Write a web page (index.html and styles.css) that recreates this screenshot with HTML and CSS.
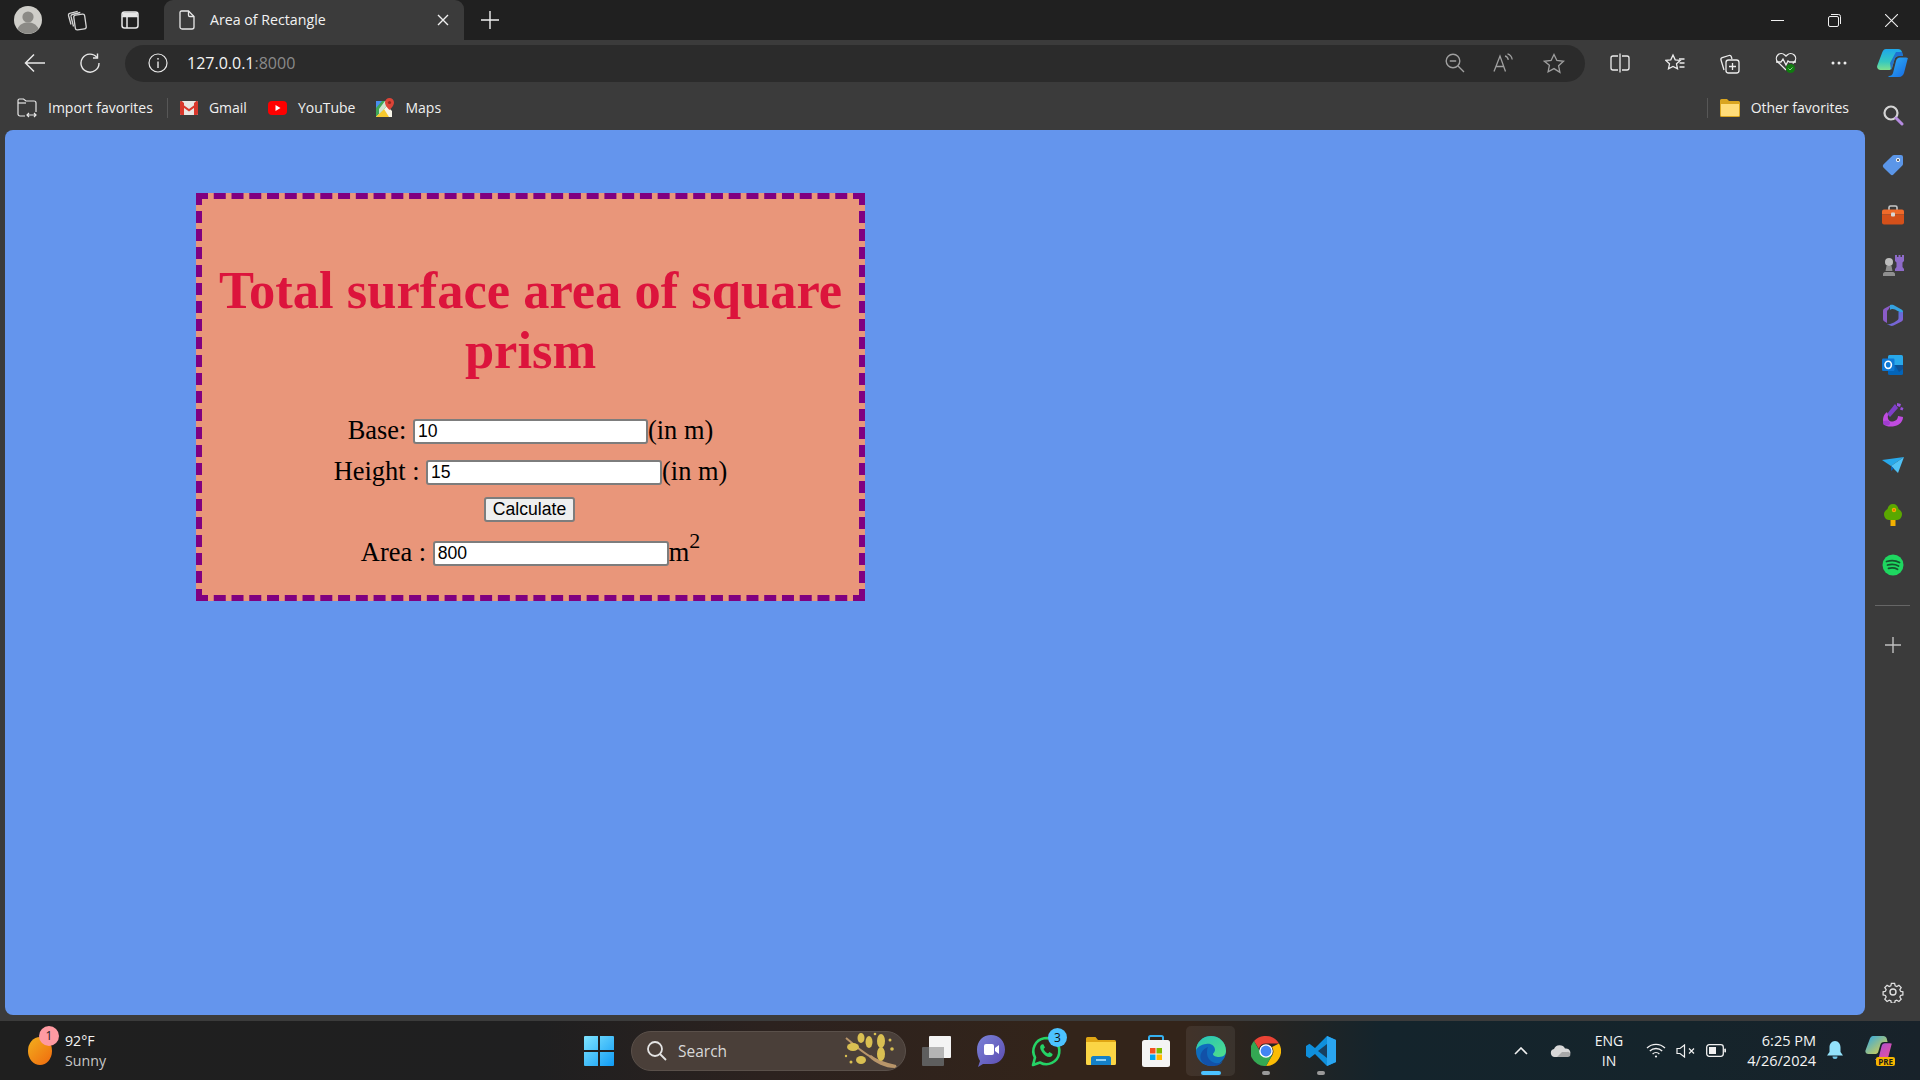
FILE: index.html
```html
<!DOCTYPE html>
<html>
<head>
  <meta charset="utf-8">
  <title>Area of Rectangle</title>
  <link rel="stylesheet" href="styles.css">
</head>
<body>
  <div id="app">

    <!-- tab strip -->
    <div class="tabstrip">
      <svg class="avatar" width="28" height="28" viewBox="0 0 28 28"><circle cx="14" cy="14" r="14" fill="#cfcec9"/><circle cx="14" cy="11" r="5.6" fill="#8b8a86"/><path d="M3.5 23c2-5 6-6.5 10.500-6.500s8.500 1.500 10.500 6.500a14 14 0 0 1-21 0z" fill="#8b8a86"/></svg>
      <svg class="collections-ico" width="22" height="24" viewBox="0 0 22 24" fill="none" stroke="#d6d6d6" stroke-width="1.300"><path d="M5 16.500 2.500 7.500c-.3-1 .3-1.800 1.200-2.100l8-2"/><path d="M7.500 18.500 5 8.500c-.2-1 .4-1.800 1.300-2l8-2"/><rect x="8.500" y="6.500" width="11" height="15" rx="2" transform="rotate(-8 14 14)"/></svg>
      <svg class="vtabs-ico" width="18" height="18" viewBox="0 0 18 18" fill="none" stroke="#e6e6e6" stroke-width="1.500"><rect x="1" y="1" width="16" height="16" rx="2.500"/><path d="M1 5.500h16M6 5.500V17"/><path d="M1.500 1.500h15v4h-15z" fill="#e6e6e6" stroke="none"/></svg>
      <div class="tab">
        <svg width="16" height="20" viewBox="0 0 16 20" fill="none" stroke="#e8e8e8" stroke-width="1.300"><path d="M2.500 1h7L15 6.500V17a2 2 0 0 1-2 2H3a2 2 0 0 1-2-2V2.500A1.500 1.500 0 0 1 2.500 1z"/><path d="M9.500 1v4.200a1.300 1.300 0 0 0 1.300 1.300H15"/></svg>
        <span class="tab-title">Area of Rectangle</span>
        <svg class="tab-close" width="12" height="12" viewBox="0 0 12 12" stroke="#f0f0f0" stroke-width="1.400"><path d="M1 1l10 10M11 1 1 11"/></svg>
      </div>
      <svg class="new-tab" width="18" height="18" viewBox="0 0 18 18" stroke="#f0f0f0" stroke-width="1.400"><path d="M9 0v18M0 9h18"/></svg>
      <div class="window-controls">
        <svg width="13" height="13" viewBox="0 0 13 13" stroke="#f0f0f0" stroke-width="1"><path d="M0 6.500h13"/></svg>
        <svg width="13" height="13" viewBox="0 0 13 13" fill="none" stroke="#f0f0f0" stroke-width="1"><rect x=".5" y="2.500" width="10" height="10" rx="1.500"/><path d="M3 .5h7.500a2 2 0 0 1 2 2V10"/></svg>
        <svg width="13" height="13" viewBox="0 0 13 13" stroke="#f0f0f0" stroke-width="1.100"><path d="M0 0l13 13M13 0 0 13"/></svg>
      </div>
    </div>

    <!-- toolbar -->
    <div class="toolbar">
      <svg class="back" width="22" height="20" viewBox="0 0 22 20" fill="none" stroke="#e8e8e8" stroke-width="1.500"><path d="M21 10H2M10 1.500 1.500 10l8.500 8.500"/></svg>
      <svg class="reload" width="20" height="20" viewBox="0 0 20 20" fill="none" stroke="#e8e8e8" stroke-width="1.400"><path d="M17 4.500A9 9 0 1 0 19 10"/><path d="M17.500 .5v4.500H13"/></svg>
      <div class="omnibox">
        <svg width="20" height="20" viewBox="0 0 20 20" fill="none" stroke="#e8e8e8" stroke-width="1.200"><circle cx="10" cy="10" r="9"/><path d="M10 8.500V15" stroke-width="1.400"/><circle cx="10" cy="5.800" r=".9" fill="#e8e8e8" stroke="none"/></svg>
        <span class="url">127.0.0.1<span class="port">:8000</span></span>
        <div class="omni-right">
          <svg width="20" height="20" viewBox="0 0 20 20" fill="none" stroke="#a0a0a0" stroke-width="1.400"><circle cx="8" cy="8" r="6.800"/><path d="M4.800 8h6.400M13 13l6 6"/></svg>
          <svg width="22" height="20" viewBox="0 0 22 20" fill="none" stroke="#a0a0a0" stroke-width="1.300"><path d="M1 18.500 7 3l5.500 15.500M3 13.500h8"/><path d="M12 3c2 .5 3 2 3.300 3.800M14.500 .8c2.800.8 4.300 3 4.700 5.700"/></svg>
          <svg width="22" height="21" viewBox="0 0 22 21" fill="none" stroke="#a0a0a0" stroke-width="1.300"><path d="m11 1.500 2.900 6 6.600.8-4.900 4.500 1.300 6.500L11 15.600l-5.900 3.200 1.300-6.500L1.500 8.300l6.600-.8z"/></svg>
        </div>
      </div>
      <div class="tool-icons">
        <svg width="20" height="20" viewBox="0 0 20 20" fill="none" stroke="#ececec" stroke-width="1.300"><path d="M8 3H3a2 2 0 0 0-2 2v10a2 2 0 0 0 2 2h5M12 3h5a2 2 0 0 1 2 2v10a2 2 0 0 1-2 2h-5M10 .5v19"/></svg>
        <svg width="20" height="20" viewBox="0 0 20 20" fill="none" stroke="#ececec" stroke-width="1.300"><path d="m8 2 2.200 4.800 5 .6-3.700 3.400 1 5L8 13.400 3.500 15.800l1-5L.8 7.400l5-.6z"/><path d="M14 6h5.500M14.500 10h5M14.500 14h5"/></svg>
        <svg width="21" height="21" viewBox="0 0 21 21" fill="none" stroke="#ececec" stroke-width="1.300"><rect x="7" y="7" width="13" height="13" rx="2.500"/><path d="M13.500 10v7M10 13.500h7"/><path d="M5 17 2 7c-.3-1 .2-2 1.200-2.300L10 2.500c1-.3 2 .2 2.300 1.200L13 6"/></svg>
        <svg width="22" height="22" viewBox="0 0 22 22" fill="none" stroke="#ececec" stroke-width="1.300"><path d="M11 18 2.800 10a5 5 0 0 1 0-7 5 5 0 0 1 7 0L11 4.200 12.200 3a5 5 0 0 1 7 0 5 5 0 0 1 0 7l-1.500 1.500"/><path d="M1 10h5l2-3 3 6 2-4 1.500 1H21"/><circle cx="15.500" cy="16.500" r="4.500" fill="#107c10" stroke="none"/><path d="m13.500 16.500 1.500 1.500 2.500-2.500" stroke="#9ad29a" stroke-width=".9"/></svg>
        <svg width="16" height="4" viewBox="0 0 16 4" fill="#ececec"><circle cx="2" cy="2" r="1.500"/><circle cx="8" cy="2" r="1.500"/><circle cx="14" cy="2" r="1.500"/></svg>
      </div>
      <svg class="copilot" width="32" height="28" viewBox="0 0 32 28">
        <defs>
          <linearGradient id="cpA" x1="0" y1="0" x2="0" y2="1"><stop offset="0" stop-color="#1ea7ec"/><stop offset=".6" stop-color="#35c8c0"/><stop offset="1" stop-color="#7ee08e"/></linearGradient>
          <linearGradient id="cpB" x1="0" y1="0" x2="1" y2="1"><stop offset="0" stop-color="#30b4f4"/><stop offset="1" stop-color="#1668e3"/></linearGradient>
        </defs>
        <path d="M9 0h12c2 0 3.500 1 4 3l1 4H22c-2.500 0-4 1.500-4.500 3.500L15 19c-.5 1.500-2 2-3.500 2H3.500C1 21-.5 19 .3 16.500L5 4C6 1.500 7 0 9 0z" fill="url(#cpA)"/>
        <path d="M31 8.500 27 24c-.6 2-2.500 4-5 4H12c-1 0-1-1 0-1 2 0 3.500-1 4-3l3-12c.5-2 2-3.500 4-3.500h6c1.500 0 2.500 1 2 2.500z" fill="url(#cpB)"/>
        <path d="M25 3l1 4h-4c-2.500 0-4 1.500-4.500 3.500L15 19c-.5 1.500-1 2-1 2l-1-7 6-11z" fill="#1b5fd0" opacity=".8"/>
      </svg>
    </div>

    <div class="browser-body">
      <div class="content-col">
        <!-- favorites bar -->
        <div class="favbar">
          <div class="fav fav-import">
            <svg width="20" height="20" viewBox="0 0 20 20" fill="none" stroke="#e8e8e8" stroke-width="1.200"><path d="M8 18H3a2 2 0 0 1-2-2V2.500A1.500 1.500 0 0 1 2.500 1h4L9 3h8a2 2 0 0 1 2 2v9"/><path d="M1 5h8"/><path d="M10 17h9M12 15l-2 2 2 2M17 15l2 2-2 2"/></svg>
            <span>Import favorites</span>
          </div>
          <div class="fav-sep"></div>
          <div class="fav">
            <svg width="18" height="14" viewBox="0 0 18 14"><rect width="18" height="14" rx="1.500" fill="#e9e6e3"/><path d="M0 1.500 9 8l9-6.500V4L9 10.500 0 4z" fill="#d9372c"/><path d="M0 1.500c0-1 1-1.800 2-1.300L4 2v12H1.500A1.500 1.500 0 0 1 0 12.500zM18 1.500c0-1-1-1.800-2-1.300L14 2v12h2.500a1.500 1.500 0 0 0 1.500-1.500z" fill="#d9372c"/></svg>
            <span>Gmail</span>
          </div>
          <div class="fav">
            <svg width="19" height="14" viewBox="0 0 19 14"><rect width="19" height="14" rx="4" fill="#f00"/><path d="m7.500 4 5 3-5 3z" fill="#fff"/></svg>
            <span>YouTube</span>
          </div>
          <div class="fav">
            <svg width="18" height="19" viewBox="0 0 18 19"><path d="M0 3h11v16H0z" fill="#3fa757"/><path d="M0 19 11 8l5 5v6z" fill="#f7f4e8"/><path d="M0 19 8 11l5 8z" fill="#f7c92e"/><path d="M0 3h6L0 10z" fill="#4a8ef0"/><path d="M3 11 9 3h2v5l-8 8z" fill="#cfe3cf"/><path d="M13.500 0A4.500 4.500 0 0 0 9 4.500C9 8 13.500 12 13.500 12S18 8 18 4.500A4.500 4.500 0 0 0 13.500 0z" fill="#dc4437"/><circle cx="13.500" cy="4.500" r="1.600" fill="#8e2a22"/></svg>
            <span>Maps</span>
          </div>
          <div class="fav-spacer"></div>
          <div class="fav-sep"></div>
          <div class="fav other-fav">
            <svg width="20" height="18" viewBox="0 0 20 18"><path d="M1.500 0h5.500l2 2h9.500A1.500 1.500 0 0 1 20 3.500v13a1.500 1.500 0 0 1-1.500 1.500h-17A1.500 1.500 0 0 1 0 16.500v-15A1.500 1.500 0 0 1 1.500 0z" fill="#d9a520"/><path d="M1 5h18v11.500a.5.500 0 0 1-.5.500h-17a.5.500 0 0 1-.5-.5z" fill="#ffdd7a"/></svg>
            <span>Other favorites</span>
          </div>
        </div>

        <!-- the page itself -->
        <div class="viewport">
          <div class="box">
            <h1>Total surface area of square prism</h1>
            <div class="row">Base: <input type="text" class="in-base" value="10">(in m)</div>
            <div class="row">Height : <input type="text" class="in-height" value="15">(in m)</div>
            <div class="row row-btn"><button type="button">Calculate</button></div>
            <div class="row row-area">Area : <input type="text" class="in-area" value="800">m<sup>2</sup></div>
          </div>
        </div>
      </div>

      <!-- edge sidebar -->
      <div class="sidebar">
        <div class="side-item"><svg width="22" height="22" viewBox="0 0 22 22" fill="none"><circle cx="9" cy="9" r="6.500" stroke="#d4d4d4" stroke-width="2.200"/><path d="m14 14 6 6" stroke="#b58be0" stroke-width="3" stroke-linecap="round"/></svg></div>
        <div class="side-item"><svg width="22" height="22" viewBox="0 0 22 22"><path d="M12 1h7a2 2 0 0 1 2 2v7a2 2 0 0 1-.6 1.400l-9 9.200a2 2 0 0 1-2.800 0l-7.200-7.200a2 2 0 0 1 0-2.800l9.200-9A2 2 0 0 1 12 1z" fill="#5b96e8"/><circle cx="16" cy="6" r="2" fill="#fff"/><circle cx="16" cy="6" r="1" fill="#333"/></svg></div>
        <div class="side-item"><svg width="22" height="20" viewBox="0 0 22 20"><path d="M7 5V2.500A1.500 1.500 0 0 1 8.500 1h5A1.500 1.500 0 0 1 15 2.500V5" fill="none" stroke="#c8c8c8" stroke-width="1.600"/><path d="M2 4.500h18A2 2 0 0 1 22 6.500v3H0v-3a2 2 0 0 1 2-2z" fill="#f06a2a"/><path d="M0 9.500h22v8a2 2 0 0 1-2 2H2a2 2 0 0 1-2-2z" fill="#d4501a"/><rect x="9" y="7.500" width="4" height="4" rx="1" fill="#d8d8d8"/></svg></div>
        <div class="side-item"><svg width="22" height="22" viewBox="0 0 22 22"><path d="M13 1h2v2h1.500V1h2v2H20V1h2v6l-1.500 1.500V13l1.500 2v2h-9v-2l1.500-2V8.500L13 7z" fill="#8e6bc9"/><circle cx="7" cy="8" r="4" fill="#bdbdbd"/><path d="M4.500 12h5l1 5h-7zM1 22v-2c0-1 1-2 2-2h8c1 0 2 1 2 2v2z" fill="#8f8f8f"/></svg></div>
        <div class="side-item"><svg width="22" height="22" viewBox="0 0 22 22"><defs><linearGradient id="m365" x1="0" y1="0" x2="1" y2="1"><stop offset="0" stop-color="#2f7fe0"/><stop offset="1" stop-color="#9b59d0"/></linearGradient></defs><path d="M9 1 2.500 4.500C1.500 5 1 6 1 7v8c0 1 .5 2 1.500 2.500L5 19V8c0-1 .5-2 1.500-2.500z" fill="#8a5cc8"/><path d="M8 1c1-.5 2.500-.5 3.500 0l8 4.500c1 .5 1.500 1.500 1.500 2.500v2l-8-4.500c-2-1-4-.5-5 .5z" fill="#35a2e0"/><path d="M21 8v7c0 1-.5 2-1.500 2.500l-8 4c-1 .5-2.500.5-3.500 0L5 20c3 .5 5-.5 7-1.500l3-2c1-.5 1.500-1.500 1.500-2.500V8z" fill="url(#m365)"/></svg></div>
        <div class="side-item"><svg width="21" height="20" viewBox="0 0 21 20"><rect x="6" y="0" width="15" height="19" rx="1.500" fill="#28a8ea"/><path d="M6 10h15v8.500a1.500 1.500 0 0 1-1.500 1.500h-12A1.500 1.500 0 0 1 6 18.500z" fill="#0364b8"/><path d="M13 10h8v4l-4 3z" fill="#14447d" opacity=".6"/><rect x="0" y="3.500" width="12.500" height="12.500" rx="1.200" fill="#0f78d4"/><ellipse cx="6.200" cy="9.800" rx="3.200" ry="3.600" fill="none" stroke="#fff" stroke-width="1.600"/></svg></div>
        <div class="side-item"><svg width="22" height="24" viewBox="0 0 22 24"><path d="M13 1 5 11l3 3 8-9z" fill="#7e3fc8"/><path d="M15 0l4 1-1 3-3-1zM19 4l2.500 1-1 2.500-2.500-1z" fill="#9b51dd"/><path d="M5 9C1 12 0 17 2 21c2 3 7 3 11 2 5-1 8-5 8-9l-5-1c0 3-2 5-5 5.500S5 17 6 12z" fill="#c04be0"/><ellipse cx="4.500" cy="20" rx="3.500" ry="2.500" fill="#a03cd0"/></svg></div>
        <div class="side-item"><svg width="22" height="16" viewBox="0 0 22 16"><path d="M0 3 22 0 9 9z" fill="#28a8ea"/><path d="M22 0 9 9l7 7z" fill="#50c1f5"/><path d="M9 9v5l3-2.500z" fill="#0b5fb0"/></svg></div>
        <div class="side-item"><svg width="18" height="22" viewBox="0 0 18 22"><rect x="6.500" y="14" width="5" height="8" fill="#f3b000"/><path d="M9 0c3 0 5 2 5.500 5 2 1 3.500 3 3.500 5 0 3-2 6-5 6H5c-3 0-5-3-5-6 0-2 1.500-4 3.500-5C4 2 6 0 9 0z" fill="#5aa800"/><circle cx="10" cy="6" r="2.200" fill="#f3b000"/><circle cx="10" cy="6" r="1" fill="#e26a00"/></svg></div>
        <div class="side-item"><svg width="22" height="22" viewBox="0 0 22 22" fill="none"><circle cx="11" cy="11" r="10.500" fill="#1ed760"/><path d="M4.500 7.500c4.500-1.300 9.500-1 13 1M5.500 11c4-1 8-.7 11 1M6.500 14.300c3.200-.8 6.500-.5 9 .9" stroke="#14532d" stroke-width="1.800" stroke-linecap="round"/></svg></div>
        <div class="side-sep"></div>
        <svg class="side-plus" width="16" height="16" viewBox="0 0 16 16" stroke="#c0c0c0" stroke-width="1.400"><path d="M8 0v16M0 8h16"/></svg>
        <svg class="side-gear" width="22" height="22" viewBox="0 0 22 22" fill="none" stroke="#e0e0e0" stroke-width="1.400"><circle cx="11" cy="11" r="3"/><path d="M9.200 1.500h3.600l.6 2.700 1.800.8 2.400-1.500 2.500 2.500-1.500 2.400.8 1.800 2.600.6v3.400l-2.600.6-.8 1.800 1.500 2.400-2.500 2.500-2.400-1.500-1.800.8-.6 2.600H9.200l-.6-2.600-1.800-.8-2.400 1.500-2.500-2.500 1.500-2.400-.8-1.800-2.600-.6v-3.400l2.600-.6.8-1.800-1.500-2.400 2.500-2.500 2.400 1.500 1.800-.8z" transform="translate(1.100 1.100) scale(.9)"/></svg>
      </div>
    </div>

    <!-- windows taskbar -->
    <div class="taskbar">
      <div class="weather">
        <div class="weather-ico"><span class="weather-badge">1</span></div>
        <div class="weather-text"><div>92°F</div><div class="sunny">Sunny</div></div>
      </div>

      <div class="tb-center">
        <svg class="winlogo" width="30" height="30" viewBox="0 0 30 30"><defs><linearGradient id="wl" x1="0" y1="0" x2="1" y2="1"><stop offset="0" stop-color="#7fe4ff"/><stop offset="1" stop-color="#0f9bf5"/></linearGradient></defs><path d="M1 0h13v14H0V1a1 1 0 0 1 1-1zM16 0h13a1 1 0 0 1 1 1v13H16zM0 16h14v14H1a1 1 0 0 1-1-1zM16 16h14v13a1 1 0 0 1-1 1H16z" fill="url(#wl)"/></svg>
        <div class="searchbox">
          <svg width="21" height="21" viewBox="0 0 21 21" fill="none" stroke="#e4e4e4" stroke-width="1.800"><circle cx="9" cy="9" r="7"/><path d="m14 14 6 6"/></svg>
          <span>Search</span>
          <svg class="search-art" width="56" height="38" viewBox="0 0 56 38"><path d="M3 6c10 8 22 22 50 28" fill="none" stroke="#b9966a" stroke-width="2"/><path d="M28 23c6 5 14 10 26 11l-2 2c-10 0-20-5-26-11z" fill="#b9966a"/><g fill="#d9bf52"><ellipse cx="10" cy="15" rx="6" ry="4"/><ellipse cx="18" cy="6" rx="3.500" ry="5"/><ellipse cx="26" cy="10" rx="3.500" ry="6"/><ellipse cx="38" cy="9" rx="4" ry="7"/><ellipse cx="38" cy="22" rx="4" ry="7"/><ellipse cx="18" cy="28" rx="5" ry="4"/><circle cx="47" cy="8" r="1.500"/><circle cx="49" cy="17" r="1.800"/><circle cx="8" cy="30" r="1.500"/><circle cx="3" cy="24" r="1.200"/><circle cx="32" cy="2" r="1.300"/></g></svg>
        </div>
        <div class="tb-apps">
          <div class="tb-app">
            <svg width="30" height="30" viewBox="0 0 30 30"><rect x="1" y="11" width="22" height="19" rx="1" fill="#5e5e5e"/><rect x="8" y="0" width="22" height="22" rx="1" fill="#f4f4f4"/><rect x="8" y="11" width="15" height="11" fill="#b5b5b5"/></svg>
          </div>
          <div class="tb-app">
            <svg width="28" height="32" viewBox="0 0 28 32"><defs><linearGradient id="mt" x1="0" y1="0" x2="1" y2="1"><stop offset="0" stop-color="#7b83d8"/><stop offset="1" stop-color="#5b4bb0"/></linearGradient></defs><path d="M14 0c8 0 14 6 14 14.500S22 29 14 29H6l-5 3 2-6C1 23 0 19 0 14.500 0 6 6 0 14 0z" fill="url(#mt)"/><rect x="7" y="9" width="10" height="11" rx="2" fill="#fff"/><path d="m18 13 4-3v9l-4-3z" fill="#fff"/></svg>
          </div>
          <div class="tb-app">
            <svg class="wa" width="32" height="34" viewBox="0 0 32 34" fill="none"><path d="M3 31l2-7.500A13 13 0 1 1 10 28.500z" stroke="#25d366" stroke-width="2.600" stroke-linejoin="round"/><path d="M11 11c-1.500 1.500-1 4 1 7s5 5 7.500 5c2 0 3.500-2 3-3l-3-2-1.500 1.500c-2-.8-3.500-2.500-4.500-4.500l1.500-1.500-1.500-3c-1-.5-1.800 0-2.500.5z" fill="#25d366"/></svg>
            <span class="app-badge">3</span>
          </div>
          <div class="tb-app">
            <svg width="30" height="28" viewBox="0 0 30 28"><path d="M1.500 0h8L12 3h16.500A1.500 1.500 0 0 1 30 4.500V10H0V1.500A1.500 1.500 0 0 1 1.500 0z" fill="#e0a614"/><path d="M0 5h30v21.500a1.500 1.500 0 0 1-1.500 1.500h-27A1.500 1.500 0 0 1 0 26.500z" fill="#fbd545"/><path d="M5 28v-7c0-1 1-2 2-2h16c1 0 2 1 2 2v7z" fill="#1480c8"/><path d="M10 23h10" stroke="#8fd0f5" stroke-width="2"/></svg>
          </div>
          <div class="tb-app">
            <svg width="28" height="32" viewBox="0 0 28 32"><path d="M7 6V2.500A1.500 1.500 0 0 1 8.500 1h11A1.500 1.500 0 0 1 21 2.500V6" fill="none" stroke="#35b0ef" stroke-width="2"/><rect y="5" width="28" height="27" rx="2.500" fill="#f4f4f4"/><rect x="8" y="13" width="5.500" height="5.500" fill="#f25022"/><rect x="14.500" y="13" width="5.500" height="5.500" fill="#7fba00"/><rect x="8" y="19.500" width="5.500" height="5.500" fill="#00a4ef"/><rect x="14.500" y="19.500" width="5.500" height="5.500" fill="#ffb900"/></svg>
          </div>
          <div class="tb-app tb-app-active">
            <svg width="30" height="30" viewBox="0 0 30 30"><defs><linearGradient id="eg" x1="0" y1="0" x2="1" y2="1"><stop offset="0" stop-color="#27c3b8"/><stop offset="1" stop-color="#50e08a"/></linearGradient></defs><circle cx="15" cy="15" r="15" fill="#0f6cbd"/><path d="M0 15C0 6 7 0 15 0s15 6 15 15c0 3-2 6-7 6-3 0-6-1-6-3 0-1 2-2 2-4 0-4-4-7-9-6-5 .5-9 3-10 7z" fill="url(#eg)"/><path d="M11 17c0 6 5 11 12 10 2-.3 3-1 4-2-3 5-8 5-12 5-4 0-8-2-10-6C3 19 6 13 12 11c-1 2-1 4-1 6z" fill="#1251a8"/></svg>
            <span class="run-dot run-dot-active"></span>
          </div>
          <div class="tb-app">
            <svg width="30" height="30" viewBox="0 0 30 30"><path d="M15 0a15 15 0 0 1 13 7.500H15a7.500 7.500 0 0 0-7.200 5.300L3 5a15 15 0 0 1 12-5z" fill="#ea4335"/><path d="M28 7.500A15 15 0 0 1 15 30l6.500-11.300A7.500 7.500 0 0 0 21 11z" fill="#fbbc05"/><path d="M15 30A15 15 0 0 1 3 5l6.500 11.300A7.500 7.500 0 0 0 21.500 18.700z" fill="#34a853"/><circle cx="15" cy="15" r="6.800" fill="#fff"/><circle cx="15" cy="15" r="5.400" fill="#4285f4"/></svg>
            <span class="run-dot"></span>
          </div>
          <div class="tb-app">
            <svg width="30" height="30" viewBox="0 0 30 30"><path d="M21 0 30 4v22l-9 4-12-12-5.500 4.200L0 20V10l3.500-2.200L9 12z" fill="#0f8fdc"/><path d="M21 8v14l-9-7z" fill="#173f5f"/><path d="M21 0 30 4v22l-9 4z" fill="#2aa5f0"/></svg>
            <span class="run-dot"></span>
          </div>
        </div>
      </div>

      <div class="tray">
        <svg width="14" height="8" viewBox="0 0 14 8" fill="none" stroke="#f0f0f0" stroke-width="1.600"><path d="m1 7 6-6 6 6"/></svg>
        <svg class="tray-cloud" width="21" height="12" viewBox="0 0 21 12"><path d="M5 12a4 4 0 0 1-1-7.900A6 6 0 0 1 15 3.500 4.300 4.300 0 0 1 17 12z" fill="#d8d8d8"/><path d="M7 12l5-5 5 0a2.500 2.500 0 0 1 1.500 4.800l-1.500.2z" fill="#a8a8a8"/></svg>
        <div class="tray-lang"><div>ENG</div><div>IN</div></div>
        <svg class="tray-wifi" width="20" height="15" viewBox="0 0 20 15" fill="none" stroke="#f0f0f0" stroke-width="1.300"><path d="M1 5a13 13 0 0 1 18 0M3.800 8a9 9 0 0 1 12.400 0M6.600 11a5 5 0 0 1 6.800 0"/><circle cx="10" cy="13.500" r="1.100" fill="#f0f0f0" stroke="none"/></svg>
        <svg class="tray-vol" width="20" height="14" viewBox="0 0 20 14" fill="none" stroke="#f0f0f0" stroke-width="1.200"><path d="M1 4.500h3L8.500 1v12L4 9.500H1z"/><path d="m13 4.500 5 5M18 4.500l-5 5"/></svg>
        <svg class="tray-batt" width="20" height="13" viewBox="0 0 20 13"><rect x=".7" y=".7" width="16.600" height="11.600" rx="2.500" fill="none" stroke="#f0f0f0" stroke-width="1.300"/><rect x="3" y="3" width="7" height="7" fill="#f0f0f0"/><rect x="18.300" y="4.500" width="1.700" height="4" rx=".8" fill="#f0f0f0"/></svg>
        <div class="tray-clock"><div>6:25 PM</div><div>4/26/2024</div></div>
        <svg class="tray-bell" width="16" height="19" viewBox="0 0 16 19"><path d="M8 0c3.500 0 5.500 3 5.500 6.500V11l2.500 3.500H0L2.500 11V6.500C2.500 3 4.500 0 8 0z" fill="#93e2fb"/><path d="M5.500 15.500h5a2.500 2.500 0 0 1-5 0z" fill="#6fc4e6"/></svg>
        <div class="tray-copilot">
          <svg width="28" height="24" viewBox="0 0 32 28"><defs><linearGradient id="cpC" x1="0" y1="0" x2="1" y2="1"><stop offset="0" stop-color="#2ba7e8"/><stop offset="1" stop-color="#f0d33a"/></linearGradient><linearGradient id="cpD" x1="0" y1="0" x2="1" y2="1"><stop offset="0" stop-color="#a24fd6"/><stop offset="1" stop-color="#f0509a"/></linearGradient></defs><path d="M9 0h12c2 0 3.500 1 4 3l1 4H22c-2.500 0-4 1.500-4.500 3.500L15 19c-.5 1.500-2 2-3.500 2H3.500C1 21-.5 19 .3 16.500L5 4C6 1.500 7 0 9 0z" fill="url(#cpC)"/><path d="M31 8.500 27 24c-.6 2-2.500 4-5 4H12c-1 0-1-1 0-1 2 0 3.500-1 4-3l3-12c.5-2 2-3.500 4-3.500h6c1.500 0 2.500 1 2 2.500z" fill="url(#cpD)"/></svg>
          <span class="pre-tag">PRE</span>
        </div>
      </div>
    </div>
  </div>
</body>
</html>
```

FILE: styles.css
```css
*, *:before, *:after { box-sizing: border-box; }
html, body { height: 100%; }
body { margin: 0; padding: 0; font-family: "Open Sans", "Noto Sans", sans-serif; background-color: #3b3b3b; overflow: hidden; }
svg { display: block; flex-shrink: 0; }
#app { display: flex; flex-direction: column; height: 100%; }

/* tab strip */
.tabstrip { height: 40px; background-color: #202020; display: flex; align-items: center; padding-left: 14px; }
.collections-ico { margin-left: 24px; }
.vtabs-ico { margin-left: 33px; }
.tab {
  align-self: stretch;
  width: 300px;
  margin-left: 25px;
  background-color: #3b3b3b;
  border-radius: 9px 9px 0 0;
  display: flex;
  align-items: center;
  padding-left: 15px;
  color: #f2f2f2;
  font-size: 14.2px;
}
.tab-title { margin: 0 0 2px 15px; flex: 1; }
.tab-close { margin-right: 15px; }
.new-tab { margin-left: 17px; }
.window-controls { margin-left: auto; display: flex; align-items: center; gap: 44px; padding-right: 22px; }

/* toolbar */
.toolbar { height: 48px; background-color: #3b3b3b; display: flex; align-items: center; padding: 0 10px 2px 24px; }
.reload { margin-left: 34px; }
.omnibox {
  flex: none;
  width: 1460px;
  height: 37px;
  margin-left: 25px;
  background-color: #2b2b2b;
  border-radius: 19px;
  display: flex;
  align-items: center;
  padding: 0 20px 0 23px;
}
.url { margin-left: 19px; color: #f4f4f4; font-size: 16px; }
.port { color: #8a8a8a; }
.omni-right { margin-left: auto; display: flex; align-items: center; gap: 28px; }
.tool-icons { margin-left: 25px; display: flex; align-items: center; gap: 34.5px; }
.copilot { margin-left: 30px; }

/* main area */
.browser-body { flex: 1; display: flex; min-height: 0; }
.content-col { flex: 1; display: flex; flex-direction: column; min-width: 0; }
.favbar { height: 42px; display: flex; align-items: center; padding: 0 16px 3px 17px; color: #f0f0f0; font-size: 14px; }
.fav { display: flex; align-items: center; gap: 11px; margin-right: 21px; }
.fav-import { margin-right: 14px; }
.fav-sep { width: 1px; height: 20px; background-color: #575757; margin-right: 12px; }
.fav-spacer { flex: 1; }
.other-fav { margin-right: 0; }

/* page: values are the default sizes at 110% browser zoom */
.viewport {
  flex: 1;
  margin: 0 0 6px 5px;
  padding: 63px 0 0 191px;
  background-color: #6495ed;
  border-radius: 8px;
  font-family: "Liberation Serif", serif;
  font-size: 26.4px;
  color: #000;
}
.box {
  width: 669px;
  height: 408px;
  padding: 27px 5px 0;
  background-color: #e9967a;
  border: 6px dashed purple;
  text-align: center;
}
.box h1 { margin: 35px 0 0; font-size: 52.5px; line-height: 59.5px; color: crimson; font-weight: bold; }
.row { margin-top: 11px; line-height: 30px; }
.row:first-of-type { margin-top: 35px; }
.row-btn { margin-top: 8px; line-height: 25px; }
.row-area { margin-top: 15px; }
.row input {
  height: 25px;
  padding: 1px 3px;
  border: 2px solid #7d7d7d;
  border-radius: 3px;
  font-family: "Liberation Sans", sans-serif;
  font-size: 17.6px;
  background-color: #fff;
  color: #000;
  vertical-align: 2px;
}
.in-base { width: 235px; }
.in-height, .in-area { width: 236px; }
.row button {
  width: 91px;
  height: 25px;
  padding: 0;
  border: 2px solid #7d7d7d;
  border-radius: 3px;
  background-color: #efefef;
  font-family: "Liberation Sans", sans-serif;
  font-size: 17.6px;
  color: #000;
  position: relative;
  left: -1px;
}
.row sup { font-size: 22px; line-height: 0; vertical-align: 13px; }

/* sidebar */
.sidebar { width: 55px; display: flex; flex-direction: column; align-items: center; padding: 2px 0 18px; }
.side-item { height: 50px; display: flex; align-items: center; justify-content: center; }
.side-sep { width: 35px; height: 1px; background-color: #666; margin-top: 15px; }
.side-plus { margin-top: 31px; }
.side-gear { margin-top: auto; }

/* taskbar */
.taskbar {
  height: 59px;
  display: flex;
  align-items: center;
  color: #f4f4f4;
  background: linear-gradient(90deg, #1f1f1f 0, #1f1f20 28%, #2c221f 40%, #33241a 55%, #33241a 62%, #14242c 72%, #15242b 88%, #18222a 100%);
}
.weather { display: flex; align-items: center; width: 584px; padding-left: 28px; }
.weather-ico { position: relative; width: 24px; height: 28px; border-radius: 50%; background: linear-gradient(135deg, #f2b01e, #f0690e); }
.weather-badge {
  position: absolute;
  left: 11px;
  top: -11px;
  width: 20px;
  height: 20px;
  border-radius: 50%;
  background-color: #ff9aa2;
  color: #222;
  font-size: 12px;
  line-height: 20px;
  text-align: center;
}
.weather-text { margin-left: 13px; font-size: 14.2px; line-height: 20px; }
.sunny { color: #c8c8c8; }

.tb-center { display: flex; align-items: center; }
.searchbox {
  width: 275px;
  height: 40px;
  margin-left: 17px;
  border-radius: 20px;
  background-color: #4a3f39;
  border: 1px solid #5a504a;
  display: flex;
  align-items: center;
  padding-left: 14px;
  color: #d8d8d8;
  font-size: 15.5px;
}
.searchbox span { margin-left: 11px; }
.search-art { margin-left: auto; margin-right: 6px; }
.tb-apps { display: flex; align-items: center; margin-left: 2px; }
.tb-app { position: relative; width: 55px; height: 50px; display: flex; align-items: center; justify-content: center; }
.tb-app-active:before {
  content: "";
  position: absolute;
  top: 0;
  bottom: 0;
  left: 3px;
  right: 3px;
  background-color: rgba(255, 255, 255, 0.07);
  border-radius: 5px;
}
.tb-app-active svg { position: relative; }
.app-badge {
  position: absolute;
  left: 30px;
  top: 2px;
  width: 19px;
  height: 19px;
  border-radius: 50%;
  background-color: #4cc2ff;
  color: #111;
  font-size: 12px;
  line-height: 19px;
  text-align: center;
}
.run-dot { position: absolute; left: 50%; bottom: 1px; width: 8px; height: 4px; margin-left: -4px; border-radius: 2px; background-color: #9a9a9a; }
.run-dot-active { width: 20px; margin-left: -10px; background-color: #4cc2ff; }

.tray { margin-left: auto; display: flex; align-items: center; padding-right: 25px; font-size: 14px; }
.tray-cloud { margin-left: 22px; }
.tray-lang { width: 50px; margin-left: 13px; text-align: center; line-height: 20px; }
.tray-wifi { margin-left: 12px; }
.tray-vol { margin-left: 10px; }
.tray-batt { margin-left: 10px; }
.tray-clock { width: 90px; text-align: right; line-height: 20px; font-size: 14.5px; }
.tray-bell { margin-left: 11px; }
.tray-copilot { position: relative; width: 30px; height: 30px; margin-left: 22px; }
.pre-tag {
  position: absolute;
  right: 0;
  bottom: 0;
  padding: 0 2px;
  border-radius: 2px;
  background-color: #f7b500;
  color: #1b1b1b;
  font-size: 8px;
  font-weight: bold;
  line-height: 9px;
}
```
